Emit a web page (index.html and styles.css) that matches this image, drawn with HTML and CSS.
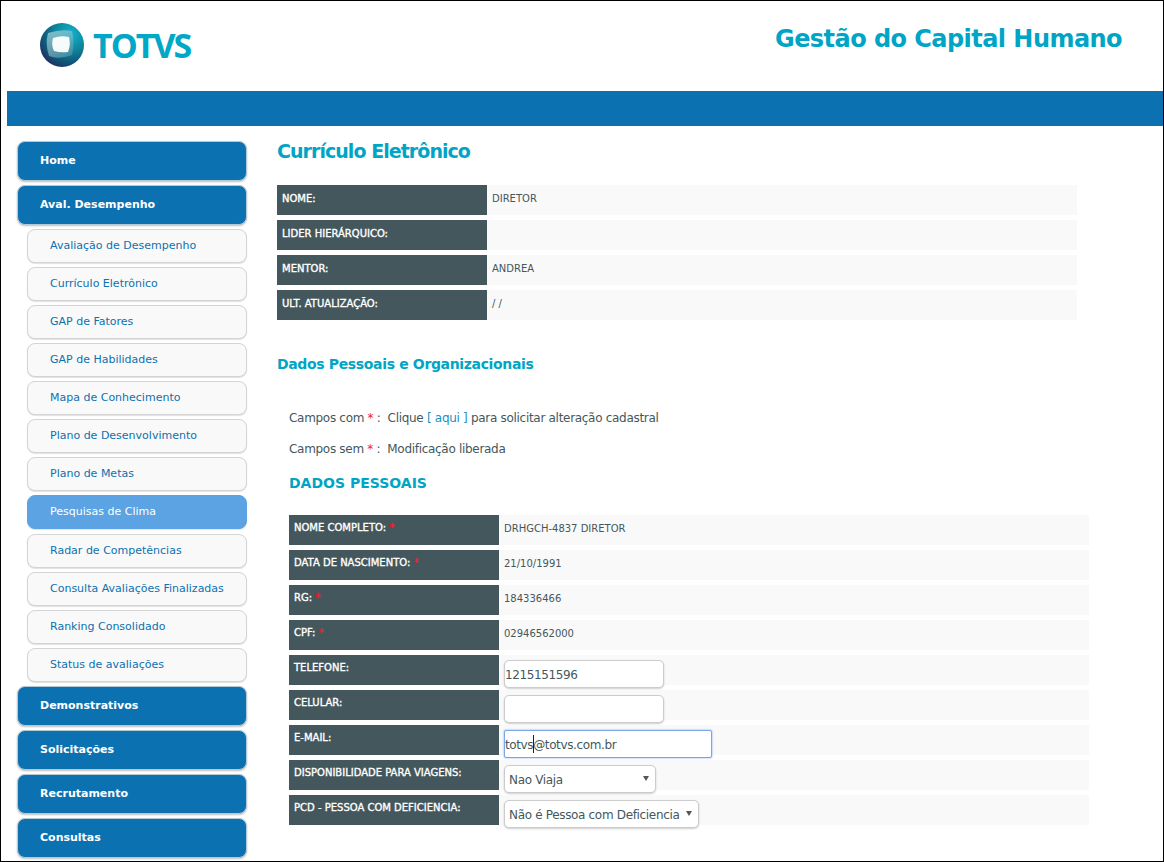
FILE: index.html
```html
<!DOCTYPE html>
<html lang="pt-BR">
<head>
<meta charset="utf-8">
<title>Gestão do Capital Humano</title>
<link rel="stylesheet" href="styles.css">
</head>
<body>
<div class="frame">
  <header class="header">
    <div class="logo">
      <svg class="logo-mark" width="46" height="46" viewBox="0 0 46 46" aria-hidden="true">
        <defs>
          <radialGradient id="sphere" cx="0.7" cy="0.25" r="0.9">
            <stop offset="0" stop-color="#12b3cc"/>
            <stop offset="0.45" stop-color="#0e8197"/>
            <stop offset="0.75" stop-color="#124f74"/>
            <stop offset="1" stop-color="#2a1e55"/>
          </radialGradient>
          <linearGradient id="pane" x1="0" y1="0" x2="1" y2="1">
            <stop offset="0" stop-color="#d6eef3"/>
            <stop offset="1" stop-color="#4f93a8"/>
          </linearGradient>
        </defs>
        <circle cx="23" cy="23" r="22" fill="url(#sphere)"/>
        <path d="M9 11 Q22 7 33 9 Q36 20 33 33 Q20 38 10 34 Q6 22 9 11Z" fill="url(#pane)" opacity="0.6"/>
        <path d="M14 16 Q22 13 30 15 Q32 23 29 30 Q22 31 15 29 Q12 23 14 16Z" fill="#fff" opacity="0.95"/>
      </svg>
      <span class="logo-text">TOTVS</span>
    </div>
    <h1 class="app-title">Gestão do Capital Humano</h1>
  </header>
  <div class="bar"></div>
  <div class="layout">
    <nav class="sidebar">
      <a class="menu">Home</a>
      <a class="menu">Aval. Desempenho</a>
      <a class="sub">Avaliação de Desempenho</a>
      <a class="sub">Currículo Eletrônico</a>
      <a class="sub">GAP de Fatores</a>
      <a class="sub">GAP de Habilidades</a>
      <a class="sub">Mapa de Conhecimento</a>
      <a class="sub">Plano de Desenvolvimento</a>
      <a class="sub">Plano de Metas</a>
      <a class="sub active">Pesquisas de Clima</a>
      <a class="sub">Radar de Competências</a>
      <a class="sub">Consulta Avaliações Finalizadas</a>
      <a class="sub">Ranking Consolidado</a>
      <a class="sub">Status de avaliações</a>
      <a class="menu">Demonstrativos</a>
      <a class="menu">Solicitações</a>
      <a class="menu">Recrutamento</a>
      <a class="menu">Consultas</a>
    </nav>
    <main class="content">
      <h2 class="page-title">Currículo Eletrônico</h2>
      <section class="table summary">
        <div class="row"><div class="label">NOME:</div><div class="value">DIRETOR</div></div>
        <div class="row"><div class="label">LIDER HIERÁRQUICO:</div><div class="value"></div></div>
        <div class="row"><div class="label">MENTOR:</div><div class="value">ANDREA</div></div>
        <div class="row"><div class="label">ULT. ATUALIZAÇÃO:</div><div class="value">/ /</div></div>
      </section>
      <h3 class="section-title">Dados Pessoais e Organizacionais</h3>
      <div class="inner">
        <p class="note">Campos com <span class="req">*</span> :&nbsp; Clique <a class="link">[ aqui ]</a> para solicitar alteração cadastral</p>
        <p class="note">Campos sem <span class="req">*</span> :&nbsp; Modificação liberada</p>
        <h4 class="group-title">DADOS PESSOAIS</h4>
        <section class="table form">
          <div class="row"><div class="label">NOME COMPLETO: <span class="req">*</span></div><div class="value">DRHGCH-4837 DIRETOR</div></div>
          <div class="row"><div class="label">DATA DE NASCIMENTO: <span class="req">*</span></div><div class="value">21/10/1991</div></div>
          <div class="row"><div class="label">RG: <span class="req">*</span></div><div class="value">184336466</div></div>
          <div class="row"><div class="label">CPF: <span class="req">*</span></div><div class="value">02946562000</div></div>
          <div class="row"><div class="label">TELEFONE:</div><div class="value field"><input class="input" type="text" value="1215151596"></div></div>
          <div class="row"><div class="label">CELULAR:</div><div class="value field"><input class="input" type="text" value=""></div></div>
          <div class="row"><div class="label">E-MAIL:</div><div class="value field"><span class="caret-wrap"><input class="input wide focused" type="text" value="totvs@totvs.com.br"><span class="caret"></span></span></div></div>
          <div class="row"><div class="label">DISPONIBILIDADE PARA VIAGENS:</div><div class="value field"><span class="select-wrap"><select class="select travel"><option>Nao Viaja</option></select><span class="arrow"></span></span></div></div>
          <div class="row"><div class="label">PCD - PESSOA COM DEFICIENCIA:</div><div class="value field"><span class="select-wrap"><select class="select pcd"><option>Não é Pessoa com Deficiencia</option></select><span class="arrow"></span></span></div></div>
        </section>
      </div>
    </main>
  </div>
</div>
</body>
</html>
```

FILE: styles.css
```css
* { box-sizing: border-box; }
html, body { margin: 0; padding: 0; background: #fff; }
body { font-family: "DejaVu Sans", Verdana, sans-serif; color: #44575c; }
.frame {
  width: 1164px;
  height: 862px;
  border: 1px solid #000;
  overflow: hidden;
}
.header {
  height: 90px;
  display: flex;
  justify-content: space-between;
  align-items: flex-start;
}
.logo {
  display: flex;
  align-items: center;
  padding: 21px 0 0 38px;
  gap: 8px;
}
.logo-text {
  font-family: "Open Sans", sans-serif;
  font-weight: 700;
  font-size: 34px;
  line-height: 46px;
  letter-spacing: -2px;
  color: #00a7c6;
}
.app-title {
  margin: 22px 41px 0 0;
  font-family: "DejaVu Sans", sans-serif;
  font-size: 24px;
  line-height: 32px;
  font-weight: 700;
  letter-spacing: -0.55px;
  color: #00a5c6;
}
.bar {
  height: 35px;
  margin-left: 6px;
  background: #0c71b0;
}
.layout {
  display: flex;
  padding: 15px 0 0 16px;
  gap: 30px;
}
.sidebar {
  width: 230px;
  display: flex;
  flex-direction: column;
  gap: 4px;
  flex: none;
}
.menu {
  height: 40px;
  padding: 0 22px 1px;
  display: flex;
  align-items: center;
  font-size: 11px;
  font-weight: 700;
  color: #fff;
  background: #0c71b0;
  border: 1px solid #b5c8d6;
  border-radius: 8px;
  box-shadow: 0 1px 2px rgba(0,0,0,.25);
}
.sub {
  height: 34px;
  margin: 0 0 0 10px;
  padding: 0 22px 1px;
  display: flex;
  align-items: center;
  font-size: 11px;
  color: #0c71b0;
  background: #f9f9f9;
  border: 1px solid #d4d4d4;
  border-radius: 8px;
  box-shadow: 0 1px 1px rgba(0,0,0,.12);
}
.sub.active {
  color: #fff;
  background: #5ba3e2;
  border-color: #5ba3e2;
  margin-bottom: 1px;
}
.content { width: 812px; flex: none; }
.page-title {
  margin: 0 0 24px;
  padding-top: 1px;
  font-size: 19px;
  line-height: 19px;
  font-weight: 700;
  letter-spacing: -0.95px;
  color: #00a5c6;
}
.row {
  display: flex;
  height: 30px;
  margin-bottom: 5px;
  font-size: 10px;
}
.table { width: 800px; }
.label {
  width: 210px;
  flex: none;
  padding: 7px 5px 0;
  background: #44575c;
  color: #fff;
  font-weight: 400;
  -webkit-text-stroke: 0.35px #fff;
  line-height: 13px;
}
.value {
  flex: 1;
  padding: 7px 5px 0;
  background: #f9f9f9;
  color: #44575c;
  line-height: 13px;
}
.section-title {
  margin: 34px 0 0;
  font-size: 14px;
  line-height: 20px;
  font-weight: 700;
  letter-spacing: -0.35px;
  color: #00a5c6;
}
.inner { padding: 36px 0 0 12px; }
.note {
  margin: 0 0 14px;
  font-size: 12px;
  line-height: 17px;
  letter-spacing: -0.3px;
  color: #44575c;
}
.req { color: #ee1c2e; }
.label .req { -webkit-text-stroke: 0.35px #ee1c2e; }
.link { color: #1c8fc2; }
.group-title {
  margin: 15px 0 0;
  font-size: 14px;
  line-height: 20px;
  font-weight: 700;
  color: #00a5c6;
}
.form { margin-top: 22px; }
.form .label { padding-top: 6px; }
.form .value { padding-top: 7px; }
.form .value.field { padding-top: 5px; }
.input {
  display: block;
  width: 160px;
  height: 28px;
  padding: 2px 0 0;
  font-family: "DejaVu Sans", sans-serif;
  font-size: 12px;
  letter-spacing: -0.38px;
  color: #44575c;
  background: #fff;
  border: 1px solid #ccc;
  border-radius: 5px;
  box-shadow: 0 1px 2px rgba(0,0,0,.2);
  outline: none;
}
.input.wide { width: 208px; }
.input.focused {
  border: 1px solid #7aa7ea;
  border-radius: 2px;
  box-shadow: 0 0 2px #6e9fe8;
}
.caret-wrap, .select-wrap { position: relative; display: inline-block; vertical-align: top; }
.caret {
  position: absolute;
  left: 29px;
  top: 5px;
  width: 1px;
  height: 18px;
  background: #222;
}
.select {
  display: block;
  appearance: none;
  -webkit-appearance: none;
  height: 28px;
  padding: 2px 4px 0;
  font-family: "DejaVu Sans", sans-serif;
  font-size: 12px;
  letter-spacing: -0.33px;
  color: #44575c;
  background: #fff;
  border: 1px solid #ccc;
  border-radius: 5px;
  box-shadow: 0 1px 2px rgba(0,0,0,.2);
}
.select.travel { width: 152px; }
.select.pcd { width: 195px; }
.arrow {
  position: absolute;
  right: 7px;
  top: 11px;
  width: 0;
  height: 0;
  border-left: 3px solid transparent;
  border-right: 3px solid transparent;
  border-top: 5px solid #555;
  pointer-events: none;
}
```
